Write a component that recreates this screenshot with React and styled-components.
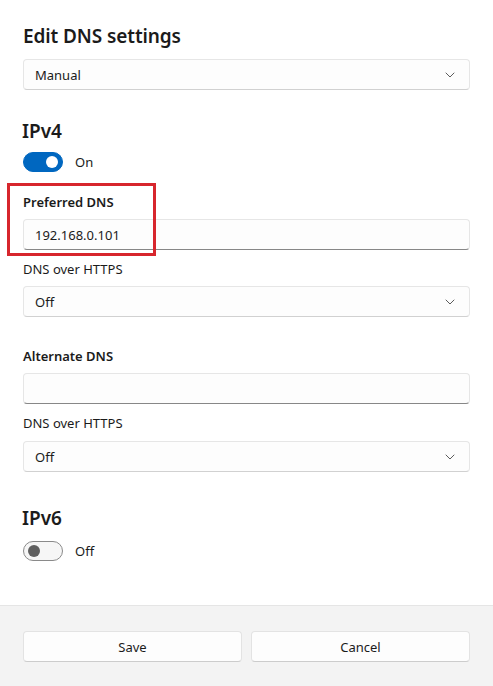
import styled, { createGlobalStyle } from 'styled-components'

const GlobalStyle = createGlobalStyle`
	html, body {
		margin: 0;
		padding: 0;
		background: #ffffff;
	}
	body {
		font-family: "Noto Sans", "Open Sans", sans-serif;
		color: #1b1b1b;
	}
`

const Dialog = styled.div`
	width: 493px;
	height: 686px;
	display: flex;
	flex-direction: column;
	background: #ffffff;
	overflow: hidden;
`

const Body = styled.div`
	flex: 1;
	padding: 22px 23px 0 23px;
	display: flex;
	flex-direction: column;
`

const Title = styled.h1`
	margin: 0;
	font-size: 19px;
	font-weight: 600;
	line-height: 28px;
	letter-spacing: -0.1px;
`

const Heading = styled.h2`
	margin: ${(p) => p.$top}px 0 0 -1px;
	font-size: 19px;
	font-weight: 600;
	line-height: 28px;
`

const SelectBox = styled.div`
	margin-top: ${(p) => p.$top}px;
	height: 31px;
	box-sizing: border-box;
	border: 1px solid #e6e6e6;
	border-bottom-color: #d1d1d1;
	border-radius: 4px;
	background: #fdfdfd;
	display: flex;
	align-items: center;
	justify-content: space-between;
	padding: 0 14px 0 11px;
	font-size: 13px;
`

const TextInput = styled.div`
	margin-top: 7px;
	height: 31px;
	box-sizing: border-box;
	border: 1px solid #e6e6e6;
	border-bottom: 1px solid #878787;
	border-radius: 4px;
	background: #fdfdfd;
	display: flex;
	align-items: center;
	padding: 0 11px;
	font-size: 13px;
`

const Label = styled.div`
	margin-top: ${(p) => p.$top || 0}px;
	font-size: 13px;
	line-height: 20px;
	font-weight: ${(p) => (p.$bold ? 600 : 400)};
`

const ToggleRow = styled.div`
	margin-top: ${(p) => p.$top}px;
	display: flex;
	align-items: center;
	gap: 12px;
	font-size: 13px;
	height: 20px;
`

const Track = styled.div`
	width: 40px;
	height: 20px;
	box-sizing: border-box;
	border-radius: 10px;
	display: flex;
	align-items: center;
	padding: 0 4px;
	justify-content: ${(p) => (p.$on ? 'flex-end' : 'flex-start')};
	background: ${(p) => (p.$on ? '#0067c0' : '#f6f6f6')};
	border: 1px solid ${(p) => (p.$on ? '#0067c0' : '#8a8a8a')};
`

const Knob = styled.div`
	width: 12px;
	height: 12px;
	border-radius: 50%;
	background: ${(p) => (p.$on ? '#ffffff' : '#5f5f5f')};
`

const Highlight = styled.div`
	position: relative;
	margin-top: 20px;
	display: flex;
	flex-direction: column;
`

const RedFrame = styled.div`
	position: absolute;
	left: -16px;
	top: -9px;
	width: 149px;
	height: 73px;
	box-sizing: border-box;
	border: 3px solid #d7262d;
	pointer-events: none;
`

const Footer = styled.div`
	height: 81px;
	box-sizing: border-box;
	background: #f3f3f3;
	border-top: 1px solid #e5e5e5;
	padding: 25px 23px 0 23px;
	display: grid;
	grid-template-columns: 1fr 1fr;
	column-gap: 9px;
	align-content: start;
`

const Button = styled.button`
	height: 31px;
	box-sizing: border-box;
	border: 1px solid #e3e3e3;
	border-bottom-color: #cccccc;
	border-radius: 4px;
	background: #fdfdfd;
	font-family: inherit;
	font-size: 13px;
	color: #1b1b1b;
	padding: 0;
`

const Chevron = () => (
	<svg width="10" height="6" viewBox="0 0 10 6" fill="none">
		<path d="M1 1l4 4 4-4" stroke="#5c5c5c" strokeWidth="1" strokeLinecap="round" strokeLinejoin="round" />
	</svg>
)

const Select = ({ value, top }) => (
	<SelectBox $top={top}>
		<span>{value}</span>
		<Chevron />
	</SelectBox>
)

const Toggle = ({ on, top }) => (
	<ToggleRow $top={top}>
		<Track $on={on}>
			<Knob $on={on} />
		</Track>
		<span>{on ? 'On' : 'Off'}</span>
	</ToggleRow>
)

export default function App() {
	return (
		<>
			<GlobalStyle />
			<Dialog>
				<Body>
					<Title>Edit DNS settings</Title>
					<Select value="Manual" top={9} />
					<Heading $top={27}>IPv4</Heading>
					<Toggle on top={7} />
					<Highlight>
						<Label $bold>Preferred DNS</Label>
						<TextInput>192.168.0.101</TextInput>
						<RedFrame />
					</Highlight>
					<Label $top={9}>DNS over HTTPS</Label>
					<Select value="Off" top={7} />
					<Label $bold $top={29}>Alternate DNS</Label>
					<TextInput />
					<Label $top={9}>DNS over HTTPS</Label>
					<Select value="Off" top={8} />
					<Heading $top={32}>IPv6</Heading>
					<Toggle on={false} top={9} />
				</Body>
				<Footer>
					<Button>Save</Button>
					<Button>Cancel</Button>
				</Footer>
			</Dialog>
		</>
	)
}
